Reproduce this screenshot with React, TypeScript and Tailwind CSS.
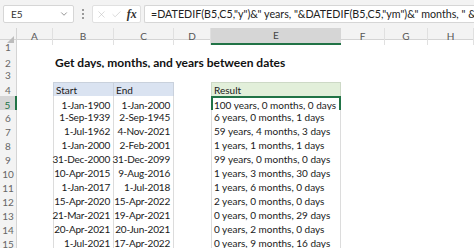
import { ChevronDown, X, Check } from 'lucide-react';

const ROWS: [string, string, string][] = [
  ['1-Jan-1900', '1-Jan-2000', '100 years, 0 months, 0 days'],
  ['1-Sep-1939', '2-Sep-1945', '6 years, 0 months, 1 days'],
  ['1-Jul-1962', '4-Nov-2021', '59 years, 4 months, 3 days'],
  ['1-Jan-2000', '2-Feb-2001', '1 years, 1 months, 1 days'],
  ['31-Dec-2000', '31-Dec-2099', '99 years, 0 months, 0 days'],
  ['10-Apr-2015', '9-Aug-2016', '1 years, 3 months, 30 days'],
  ['1-Jan-2017', '1-Jul-2018', '1 years, 6 months, 0 days'],
  ['15-Apr-2020', '15-Apr-2022', '2 years, 0 months, 0 days'],
  ['21-Mar-2021', '19-Apr-2021', '0 years, 0 months, 29 days'],
  ['20-Apr-2021', '20-Jun-2021', '0 years, 2 months, 0 days'],
  ['1-Jul-2021', '17-Apr-2022', '0 years, 9 months, 16 days'],
];

const COLS = ['A', 'B', 'C', 'D', 'E', 'F', 'G', 'H'];
const GRID = 'grid grid-cols-[17px_36px_61px_60px_37px_130px_44px_43px_1fr]';
const FORMULA =
  '=DATEDIF(B5,C5,"y")&" years, "&DATEDIF(B5,C5,"ym")&" months, " &DATEDIF(B5,C5,"md")&" days"';

export default function App() {
  return (
    <div className="w-[474px] h-[248px] overflow-hidden bg-white font-['Lato','Open_Sans',sans-serif] text-[10px] text-[#1a1a1a]">
      {/* formula bar */}
      <div className="h-[28px] bg-[#f3f3f3] flex items-center pl-[3px] gap-[3px]">
        <div className="w-[71px] h-[18px] bg-white border border-[#d6d6d6] rounded-[2px] flex items-center justify-between pl-[7px] pr-[4px] text-[10px] text-[#333]">
          <span>E5</span>
          <ChevronDown size={10} strokeWidth={1.5} className="text-[#555]" />
        </div>
        <div className="w-[12px] flex flex-col items-center gap-[2px]">
          <span className="w-[2px] h-[2px] bg-[#9a9a9a]" />
          <span className="w-[2px] h-[2px] bg-[#9a9a9a]" />
          <span className="w-[2px] h-[2px] bg-[#9a9a9a]" />
        </div>
        <div className="w-[49px] h-[18px] bg-white border border-[#e0e0e0] rounded-[2px] flex items-center justify-around px-[1px]">
          <X size={11} strokeWidth={1.2} className="text-[#bdbdbd]" />
          <Check size={11} strokeWidth={1.2} className="text-[#bdbdbd]" />
          <span className="font-['Liberation_Serif',serif] italic font-bold text-[12px] text-[#333] leading-none">fx</span>
        </div>
        <div className="flex-1 h-[18px] bg-white border border-[#d6d6d6] border-r-0 rounded-l-[2px] flex items-center pl-[6px] overflow-hidden whitespace-nowrap text-[10.7px] text-[#222]">
          {FORMULA}
        </div>
      </div>

      {/* column headers */}
      <div className={`${GRID} h-[12px] bg-[#f3f3f3] border-b border-[#d4d4d4] text-[10px] text-[#555]`}>
        <div className="relative border-r border-[#d4d4d4]">
          <span className="absolute right-[2px] bottom-[2px] w-0 h-0 border-l-[7px] border-l-transparent border-b-[7px] border-b-[#bcbcbc]" />
        </div>
        {COLS.map((c) => (
          <div
            key={c}
            className={
              c === 'E'
                ? 'flex items-center justify-center bg-[#d6d6d6] border-b-2 border-[#217346] text-[#444]'
                : 'flex items-center justify-center border-r border-[#e0e0e0]'
            }
          >
            {c}
          </div>
        ))}
      </div>

      {/* sheet rows */}
      {Array.from({ length: 15 }, (_, i) => {
        const n = i + 1;
        const data = n >= 5 ? ROWS[n - 5] : null;
        return (
          <div key={n} className={`${GRID} h-[14px] overflow-hidden whitespace-nowrap`}>
            <div
              className={
                n === 5
                  ? 'flex items-center justify-center bg-[#d6d6d6] border-r-2 border-[#217346] text-[10px] text-[#217346]'
                  : 'flex items-center justify-center bg-[#f3f3f3] border-r border-[#d4d4d4] text-[10px] text-[#666]'
              }
            >
              {n}
            </div>
            <div />
            {n === 2 ? (
              <div className="col-span-5 flex items-center pl-[2px] font-bold text-[12px] text-[#111]">
                Get days, months, and years between dates
              </div>
            ) : n === 4 ? (
              <>
                <div className="flex items-center pl-[2px] bg-[#dae3f1] border border-[#c9d1dc]">Start</div>
                <div className="flex items-center pl-[2px] bg-[#dae3f1] border-y border-r border-[#c9d1dc]">End</div>
                <div />
                <div className="flex items-center pl-[2px] bg-[#e2efda] border border-[#cdd9c6]">Result</div>
              </>
            ) : data ? (
              <>
                <div className="flex items-center justify-end pr-[3px] border-x border-b border-[#dcdcdc] tracking-[-0.2px]">{data[0]}</div>
                <div className="flex items-center justify-end pr-[3px] border-r border-b border-[#dcdcdc] tracking-[-0.2px]">{data[1]}</div>
                <div />
                {n === 5 ? (
                  <div className="relative flex items-center pl-[1px] border-2 border-[#217346]">
                    {data[2]}
                    <span className="absolute -right-[3px] -bottom-[3px] w-[4px] h-[4px] bg-[#217346] border border-white" />
                  </div>
                ) : (
                  <div className="flex items-center pl-[2px] border-x border-b border-[#dcdcdc]">{data[2]}</div>
                )}
              </>
            ) : null}
          </div>
        );
      })}
    </div>
  );
}
